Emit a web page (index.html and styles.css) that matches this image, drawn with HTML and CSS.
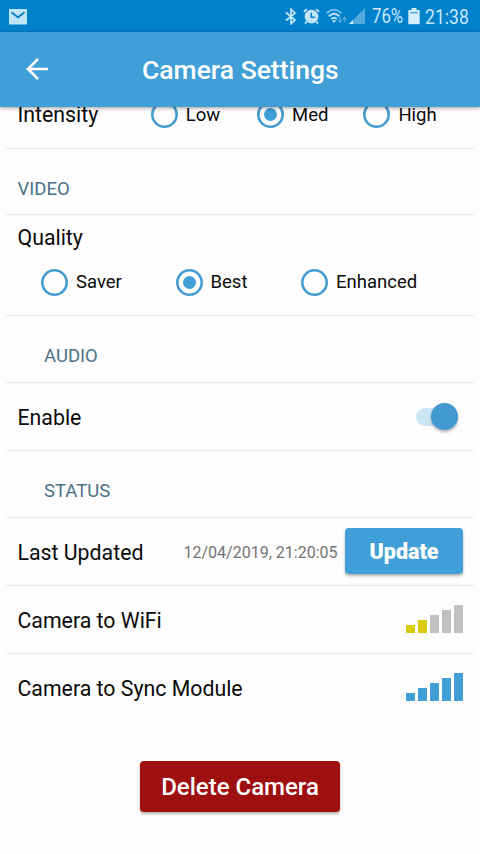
FILE: index.html
```html
<!DOCTYPE html>
<html lang="en">
<head>
<meta charset="utf-8">
<title>Camera Settings</title>
<link rel="stylesheet" href="styles.css">
</head>
<body>
<div class="statusbar">
  <svg class="mail" width="18" height="16" viewBox="0 0 18 16"><rect width="18" height="15.5" rx="1" fill="#c0e4f8"/><path d="M2.5 3.200 9 8.300l6.500-5.100" fill="none" stroke="#0780c8" stroke-width="1.800"/></svg>
  <div class="tray">
    <svg class="bt" width="12" height="17" viewBox="0 0 12 17"><path d="M1 4.500 10 12 6 15.700V1.300L10 5 1 12.500" fill="none" stroke="#c0e4f8" stroke-width="1.700"/></svg>
    <svg class="alarm" width="17" height="17" viewBox="0 0 17 17"><path d="M.8 3.800 4 1.100M16.200 3.800 13 1.100M3.500 13.500 2.200 15.800M13.500 13.500l1.300 2.300" stroke="#c0e4f8" stroke-width="1.800"/><circle cx="8.500" cy="8.700" r="6.900" fill="#c0e4f8"/><path d="M8.300 4.700v4.500h3.600" fill="none" stroke="#0780c8" stroke-width="1.500"/></svg>
    <svg class="wifi" width="22" height="17" viewBox="0 0 22 17"><g fill="none" stroke-width="1.900"><path d="M.6 5.300Q8-2 15.400 5.300" stroke="#68b6e5"/><path d="M2.800 8.200q5.200-4.800 10.400 0" stroke="#c0e4f8"/><path d="M5.200 11q2.800-2.500 5.600 0" stroke="#c0e4f8"/></g><path d="m8 15-2-2.200q2-1.500 4 0z" fill="#c0e4f8"/><path d="M14 9v5M12.200 12.200 14 14.500l1.800-2.300M18.500 14.500v-5M16.700 11.300 18.500 9l1.800 2.300" fill="none" stroke="#4fa8dc" stroke-width="1.300"/></svg>
    <svg class="cell" width="17" height="17" viewBox="0 0 17 17"><path d="M16 0v16H0z" fill="#56aade"/><path d="M4 12v4H0z" fill="#d5effc"/></svg>
    <span class="pct">76%</span>
    <svg class="battery" width="12" height="17" viewBox="0 0 12 17"><path d="M3.500 0h5v2H11q.700 0 .7.700V15.500q0 .700-.7.700H1q-.7 0-.7-.7V2.700Q.3 2 1 2h2.500z" fill="#d5effc"/><path d="M2 4.700h8" stroke="#55a9dc" stroke-width="1.500"/></svg>
    <span class="clock">21:38</span>
  </div>
</div>
<header class="appbar">
  <svg class="back" width="22" height="22" viewBox="0 0 22 22"><path d="M22 11H2M12 1 2 11l10 10" fill="none" stroke="#fff" stroke-width="2.600"/></svg>
  <h1 class="title">Camera Settings</h1>
</header>
<main class="settings">
  <section class="row intensity">
    <span class="label">Intensity</span>
    <div class="options">
      <label class="option"><span class="radio"></span>Low</label>
      <label class="option"><span class="radio checked"></span>Med</label>
      <label class="option"><span class="radio"></span>High</label>
    </div>
  </section>
  <h2 class="heading video">VIDEO</h2>
  <section class="quality">
    <span class="label">Quality</span>
    <div class="options">
      <label class="option saver"><span class="radio"></span>Saver</label>
      <label class="option best"><span class="radio checked"></span>Best</label>
      <label class="option"><span class="radio"></span>Enhanced</label>
    </div>
  </section>
  <h2 class="heading indented">AUDIO</h2>
  <section class="row">
    <span class="label">Enable</span>
    <span class="switch"><span class="thumb"></span></span>
  </section>
  <h2 class="heading indented">STATUS</h2>
  <section class="row">
    <span class="label">Last Updated</span>
    <div class="updated"><span class="date">12/04/2019, 21:20:05</span><button class="btn update">Update</button></div>
  </section>
  <section class="row">
    <span class="label">Camera to WiFi</span>
    <div class="bars weak"><i class="b1"></i><i class="b2"></i><i class="b3"></i><i class="b4"></i><i class="b5"></i></div>
  </section>
  <section class="row last">
    <span class="label">Camera to Sync Module</span>
    <div class="bars"><i class="b1"></i><i class="b2"></i><i class="b3"></i><i class="b4"></i><i class="b5"></i></div>
  </section>
  <button class="btn delete">Delete Camera</button>
</main>
</body>
</html>
```
FILE: styles.css
```css
* { box-sizing: border-box; }
body {
  margin: 0;
  width: 480px;
  height: 854px;
  overflow: hidden;
  display: flex;
  flex-direction: column;
  background: #fefefe;
  color: #0a0a0a;
  font-family: Roboto, sans-serif;
}
svg { display: block; flex: none; }
.statusbar {
  height: 32px;
  flex: none;
  display: flex;
  align-items: center;
  justify-content: space-between;
  padding: 1px 11px 0 9px;
  background: #0180cc;
  color: #c8e8fa;
  font-size: 20px;
}
.tray { display: flex; align-items: center; }
.alarm { margin-left: 6px; }
.wifi { margin-left: 6px; }
.cell { margin-left: 1px; }
.pct { margin-left: 6px; width: 32px; font-size: 19.500px; transform: scaleX(.86); transform-origin: left; white-space: nowrap; }
.battery { margin-left: 4px; }
.clock { margin-left: 5px; width: 44px; transform: scaleX(.88); transform-origin: left; white-space: nowrap; }
.appbar {
  height: 75px;
  flex: none;
  position: relative;
  z-index: 1;
  display: flex;
  align-items: center;
  padding: 0 0 1px 26px;
  background: #409fd6;
  box-shadow: 0 1px 4px rgba(0, 0, 0, .4);
}
.title {
  margin: 1px 0 0 94px;
  color: #fff;
  font-size: 26.500px;
  font-weight: 500;
  line-height: 32px;
}
.settings { flex: 1; padding: 0 6px; overflow: hidden; }
.row, .heading, .quality { border-bottom: 1px solid #e6e7e8; }
.row {
  height: 68px;
  display: flex;
  align-items: center;
  justify-content: space-between;
  padding: 0 11px;
}
.row.last { border: 0; }
.intensity { margin-top: -26px; justify-content: flex-start; }
.label { padding-left: .5px; font-size: 21.300px; line-height: 28px; white-space: nowrap; }
.row .label { margin-top: 2px; }
.row.intensity .label { margin-top: 1px; width: 82px; }
.options { display: flex; }
.intensity .options { margin-left: 52.500px; }
.option { display: flex; align-items: center; gap: 8px; font-size: 18.500px; line-height: 27px; white-space: nowrap; }
.intensity .option { width: 106.300px; line-height: 28px; }
.radio {
  width: 27px;
  height: 27px;
  flex: none;
  display: grid;
  place-items: center;
  border-radius: 50%;
  box-shadow: inset 0 0 0 2.600px #449dce;
}
.radio.checked::before { content: ""; width: 13px; height: 13px; border-radius: 50%; background: #409fd6; }
.heading {
  height: 66px;
  margin: 0;
  padding: 27px 11.500px 0;
  color: #4b7188;
  font-size: 18.500px;
  font-weight: 400;
  line-height: 26px;
}
.indented { height: 67px; padding-left: 38px; }
.quality { height: 101px; padding: 9px 11px 0; }
.quality .label { display: block; }
.quality .options { margin: 17px 0 0 24px; }
.saver { width: 134.500px; }
.best { width: 125.500px; }
.switch {
  width: 42px;
  height: 18px;
  margin-right: 5px;
  display: flex;
  align-items: center;
  justify-content: flex-end;
  border-radius: 9px;
  background: #cce5f4;
}
.thumb { width: 27px; height: 27px; flex: none; border-radius: 50%; background: #409ad0; box-shadow: 0 2px 3px rgba(0, 0, 0, .3); }
.updated { display: flex; align-items: center; gap: 7.500px; margin-top: -1px; }
.date { padding-top: 2px; color: #737373; font-size: 16px; white-space: nowrap; }
.btn { padding: 0; border: 0; border-radius: 4px; color: #fff; font-family: inherit; box-shadow: 0 2px 3px rgba(0, 0, 0, .3); }
.update { width: 118px; height: 46px; padding-top: 1px; background: #409fd6; font-size: 21.500px; font-weight: 900; }
.bars { display: flex; align-items: flex-end; gap: 3px; height: 29px; margin-top: -2px; }
.last .bars { margin-top: -3px; }
.bars i { width: 9px; background: #409fd4; }
.b1 { height: 8px; }
.b2 { height: 13px; }
.b3 { height: 18px; }
.b4 { height: 23px; }
.b5 { height: 28px; }
.weak .b1, .weak .b2 { background: #dccb0a; }
.weak .b3, .weak .b4, .weak .b5 { background: #c0c0c0; }
.delete { display: block; width: 200px; height: 51px; margin: 39px auto 0; background: #9e0f10; font-size: 24px; font-weight: 500; }
```
